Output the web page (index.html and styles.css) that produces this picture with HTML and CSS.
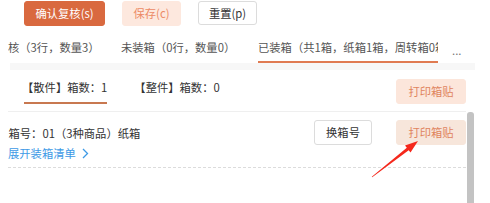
FILE: index.html
```html
<!DOCTYPE html>
<html lang="zh-CN">
<head>
<meta charset="utf-8">
<title>装箱</title>
<link rel="stylesheet" href="styles.css">
</head>
<body>
<div class="page">
  <div class="toolbar">
    <button class="btn btn-primary">确认复核(s)</button>
    <button class="btn btn-soft">保存(c)</button>
    <button class="btn btn-plain">重置(p)</button>
  </div>
  <div class="tabs">
    <span class="tab tab-1">核（3行，数量3）</span>
    <span class="tab tab-2">未装箱（0行，数量0）</span>
    <span class="tab tab-3 active">已装箱（共1箱，纸箱1箱，周转箱0箱）</span>
    <span class="more">...</span>
  </div>
  <div class="strip"></div>
  <div class="body-wrap">
    <div class="content">
      <div class="subbar">
        <span class="subtab active">【散件】箱数：1</span>
        <span class="subtab">【整件】箱数：0</span>
        <button class="btn btn-print">打印箱贴</button>
      </div>
      <div class="boxrow">
        <span class="boxname">箱号：01（3种商品）纸箱</span>
        <button class="btn btn-plain btn-swap">换箱号</button>
        <button class="btn btn-print btn-print2">打印箱贴</button>
      </div>
      <div class="expand">展开装箱清单<svg class="chev" width="7" height="11" viewBox="0 0 7 11"><path d="M1 1 L5.5 5.5 L1 10" fill="none" stroke="#3d9ae6" stroke-width="1.3"/></svg></div>
      <div class="dash"></div>
    </div>
    <div class="scrollbar"></div>
  </div>
  <svg class="arrow" width="490" height="203" viewBox="0 0 490 203">
    <polygon points="371.8,176.8 406.8,147.8 405.0,145.5 418,141 410.5,152.6 408.7,150.2 372.2,177.2" fill="#f5281c"/>
  </svg>
</div>
</body>
</html>
```

FILE: styles.css
```css
* { box-sizing: border-box; }
html, body { margin: 0; padding: 0; background: #fff; overflow: hidden; }
body {
  font-family: "Noto Sans CJK SC", "Noto Sans", sans-serif;
  font-size: 11.3px;
  color: #333;
}
.page { position: relative; width: 490px; height: 203px; overflow: hidden; }

.btn {
  font-family: inherit;
  font-size: 11.3px;
  height: 25px;
  border-radius: 3px;
  border: 1px solid transparent;
  padding: 0;
  line-height: 23px;
  cursor: pointer;
}
.toolbar {
  display: flex;
  gap: 17px;
  padding: 1px 0 0 24px;
  height: 26px;
}
.btn-primary { width: 81px; background: #d9693f; color: #fff; border-color: #d9693f; }
.btn-soft { width: 59px; background: #fde8de; color: #ec8a65; border-color: #fde8de; }
.btn-plain { width: 59px; background: #fff; color: #333; border-color: #dcdcdc; height: 24px; line-height: 22px; }

.tabs {
  display: flex;
  align-items: flex-start;
  padding-top: 13px;
  height: 37px;
  white-space: nowrap;
}
.tab {
  flex: none;
  line-height: 16px;
  padding-bottom: 6px;
  border-bottom: 2px solid transparent;
  color: #555;
  overflow: hidden;
}
.tab-1 { margin-left: 8px; width: 113px; }
.tab-2 { width: 137px; }
.tab-3 { width: 180px; }
.tab.active { border-bottom-color: #e07b52; }
.more { margin-left: 14px; padding-top: 5px; color: #777; line-height: 12px; }

.strip { height: 7px; margin: 0 15px 0 10px; background: #f7f7f7; }

.body-wrap { display: flex; }
.content { margin-left: 8px; width: 458px; }
.subbar {
  display: flex;
  align-items: flex-start;
  height: 42px;
  padding-top: 9px;
  border-bottom: 1px solid #efefef;
}
.subtab {
  line-height: 16px;
  padding-bottom: 9px;
  color: #333;
}
.subtab:first-child { margin-left: 14px; }
.subtab + .subtab { margin-left: 27px; }
.subtab.active {
  background: linear-gradient(#c87850, #c87850) no-repeat;
  background-size: 84px 2px;
  background-position: 2px 23px;
}
.btn-print {
  margin-left: auto;
  width: 70px;
  background: #fce6db;
  border-color: #fce6db;
  color: #e0845e;
}
.boxrow {
  display: flex;
  align-items: center;
  padding-top: 8px;
  height: 33px;
}
.boxname { margin-left: 0.5px; color: #333; }
.btn-swap { margin-left: auto; width: 58px; height: 25px; line-height: 23px; }
.btn-print2 { margin-left: 24px; background: #f7e6db; border-color: #f7e6db; }
.expand {
  display: flex;
  align-items: center;
  gap: 6px;
  line-height: 16px;
  color: #3d9ae6;
}
.chev { display: block; }
.dash { margin-top: 6px; border-top: 1px dashed #dcdcdc; }

.scrollbar {
  margin-top: 42px;
  margin-left: 1px;
  width: 7px;
  height: 100px;
  background: #c3c3c3;
  border-radius: 3px 3px 0 0;
}
.arrow { position: absolute; left: 0; top: 0; pointer-events: none; }
```
